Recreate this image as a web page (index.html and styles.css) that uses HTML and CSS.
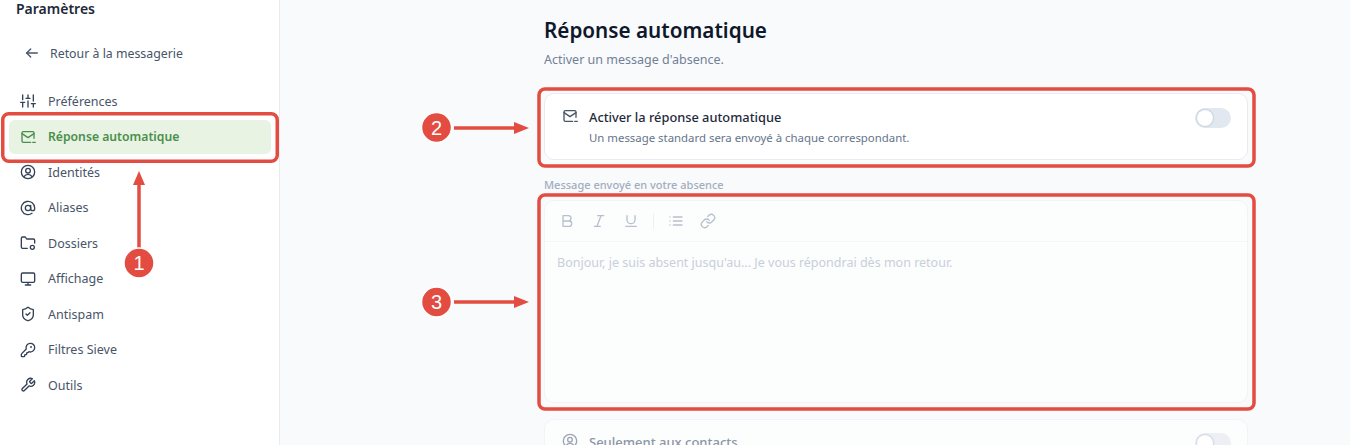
FILE: index.html
```html
<!doctype html>
<html lang="fr">
<head>
    <meta charset="UTF-8">
    <title>Réponse automatique</title>
    <link rel="stylesheet" href="styles.css">
</head>
<body>
<div class="page">
    <aside class="sidebar">
        <div class="sidebar-title">Paramètres</div>
        <a class="back-link">
            <svg class="icon back-icon" viewBox="0 0 24 24"><path d="M20 12H4"/><path d="m10 6-6 6 6 6"/></svg>
            <span>Retour à la messagerie</span>
        </a>
        <nav class="nav">
            <a class="nav-item">
                <svg class="icon" viewBox="0 0 24 24"><path d="M4 21v-7M4 10V3M12 21v-9M12 8V3M20 21v-5M20 12V3M1 14h6M9 8h6M17 16h6"/></svg>
                <span>Préférences</span>
            </a>
            <a class="nav-item active">
                <svg class="icon" viewBox="0 0 24 24"><path d="M21 14V6a2 2 0 0 0-2-2H5a2 2 0 0 0-2 2v12a2 2 0 0 0 2 2h11"/><path d="m3 7 9 6 9-6"/><path d="M19 20h4"/></svg>
                <span>Réponse automatique</span>
            </a>
            <a class="nav-item">
                <svg class="icon" viewBox="0 0 24 24"><circle cx="12" cy="12" r="10"/><circle cx="12" cy="10" r="3.5"/><path d="M6 19a7 7 0 0 1 12 0"/></svg>
                <span>Identités</span>
            </a>
            <a class="nav-item">
                <svg class="icon" viewBox="0 0 24 24"><circle cx="12" cy="12" r="4"/><path d="M16 8v5a3 3 0 0 0 6 0v-1a10 10 0 1 0-4 8"/></svg>
                <span>Aliases</span>
            </a>
            <a class="nav-item">
                <svg class="icon" viewBox="0 0 24 24"><path d="M11 20H4a2 2 0 0 1-2-2V5a2 2 0 0 1 2-2h4l2 3h10a2 2 0 0 1 2 2v4"/><circle cx="18.500" cy="18.500" r="3"/></svg>
                <span>Dossiers</span>
            </a>
            <a class="nav-item">
                <svg class="icon" viewBox="0 0 24 24"><rect x="2" y="3" width="20" height="14" rx="2"/><path d="M8 21h8M12 17v4"/></svg>
                <span>Affichage</span>
            </a>
            <a class="nav-item">
                <svg class="icon" viewBox="0 0 24 24"><path d="M20 13c0 5-3.500 7.500-7.660 8.950a1 1 0 0 1-.67-.01C7.500 20.500 4 18 4 13V6a1 1 0 0 1 1-1c2 0 4.500-1.200 6.240-2.720a1.170 1.170 0 0 1 1.520 0C14.510 3.810 17 5 19 5a1 1 0 0 1 1 1z"/><path d="m9 12 2 2 4-4"/></svg>
                <span>Antispam</span>
            </a>
            <a class="nav-item">
                <svg class="icon" viewBox="0 0 24 24"><path d="M2.586 17.414A2 2 0 0 0 2 18.828V21a1 1 0 0 0 1 1h3a1 1 0 0 0 1-1v-1a1 1 0 0 1 1-1h1a1 1 0 0 0 1-1v-1a1 1 0 0 1 1-1h.172a2 2 0 0 0 1.414-.586l.814-.814a6.500 6.500 0 1 0-4-4z"/><circle cx="16.500" cy="7.500" r=".5"/></svg>
                <span>Filtres Sieve</span>
            </a>
            <a class="nav-item">
                <svg class="icon" viewBox="0 0 24 24"><path d="M14.700 6.300a1 1 0 0 0 0 1.400l1.600 1.600a1 1 0 0 0 1.400 0l3.770-3.770a6 6 0 0 1-7.940 7.940l-6.910 6.910a2.120 2.120 0 0 1-3-3l6.910-6.910a6 6 0 0 1 7.940-7.940l-3.760 3.760z"/></svg>
                <span>Outils</span>
            </a>
        </nav>
    </aside>

    <main class="main">
        <div class="content">
            <h1 class="page-title">Réponse automatique</h1>
            <p class="page-sub">Activer un message d'absence.</p>

            <section class="card toggle-card">
                <svg class="icon" viewBox="0 0 24 24"><path d="M21 14V6a2 2 0 0 0-2-2H5a2 2 0 0 0-2 2v12a2 2 0 0 0 2 2h11"/><path d="m3 7 9 6 9-6"/><path d="M19 20h4"/></svg>
                <div class="toggle-text">
                    <div class="toggle-title">Activer la réponse automatique</div>
                    <div class="toggle-desc">Un message standard sera envoyé à chaque correspondant.</div>
                </div>
                <span class="switch"></span>
            </section>

            <div class="field-label">Message envoyé en votre absence</div>

            <section class="card editor">
                <div class="toolbar">
                    <svg class="icon tool" viewBox="0 0 24 24"><path d="M6 4h8a4 4 0 0 1 0 8H6zM6 12h9a4 4 0 0 1 0 8H6z"/></svg>
                    <svg class="icon tool" viewBox="0 0 24 24"><path d="M19 4h-9M14 20H5M15 4 9 20"/></svg>
                    <svg class="icon tool" viewBox="0 0 24 24"><path d="M6 4v6a6 6 0 0 0 12 0V4M4 20h16"/></svg>
                    <span class="tool-sep"></span>
                    <svg class="icon tool" viewBox="0 0 24 24"><path d="M8 6h13M8 12h13M8 18h13M3 6h.01M3 12h.01M3 18h.01"/></svg>
                    <svg class="icon tool" viewBox="0 0 24 24"><path d="M10 13a5 5 0 0 0 7.540.54l3-3a5 5 0 0 0-7.070-7.070l-1.720 1.710"/><path d="M14 11a5 5 0 0 0-7.540-.54l-3 3a5 5 0 0 0 7.070 7.070l1.710-1.710"/></svg>
                </div>
                <div class="editor-body">Bonjour, je suis absent jusqu'au... Je vous répondrai dès mon retour.</div>
            </section>

            <section class="card toggle-card faded">
                <svg class="icon" viewBox="0 0 24 24"><circle cx="12" cy="12" r="10"/><circle cx="12" cy="10" r="3.5"/><path d="M6 19a7 7 0 0 1 12 0"/></svg>
                <div class="toggle-text">
                    <div class="toggle-title">Seulement aux contacts</div>
                </div>
                <span class="switch"></span>
            </section>
        </div>
    </main>

    <!-- annotations drawn over the screenshot -->
    <svg class="marks" viewBox="0 0 1350 445">
        <rect class="mark-box" x="2.750" y="113.750" width="274.500" height="47.500" rx="6"/>
        <rect class="mark-box" x="539" y="89" width="715" height="77" rx="6"/>
        <rect class="mark-box" x="539" y="195" width="715" height="214" rx="6"/>

        <path class="mark-line" d="M139 248V184"/>
        <path class="mark-head" d="M139 171 145 185H133z"/>
        <circle class="mark-dot" cx="139" cy="263" r="15"/>
        <text class="mark-num" x="139" y="270">1</text>

        <path class="mark-line" d="M454 128H516"/>
        <path class="mark-head" d="M529 128 514 122V134z"/>
        <circle class="mark-dot" cx="436.500" cy="127.500" r="15"/>
        <text class="mark-num" x="436.500" y="134.500">2</text>

        <path class="mark-line" d="M454 302H516"/>
        <path class="mark-head" d="M529 302 514 296V308z"/>
        <circle class="mark-dot" cx="436.500" cy="302" r="15"/>
        <text class="mark-num" x="436.500" y="309">3</text>
    </svg>
</div>
</body>
</html>
```

FILE: styles.css
```css
*, *::after, *::before {
    box-sizing: border-box;
    margin: 0;
    padding: 0;
}

html, body {
    height: 100%;
    overflow: hidden;
}

body {
    font-family: "Noto Sans", "Liberation Sans", sans-serif;
    color: #1e293b;
    background-color: #f9fafc;
}

.page {
    position: relative;
    display: flex;
    width: 1350px;
    height: 445px;
    overflow: hidden;
}

.icon {
    width: 16px;
    height: 16px;
    flex-shrink: 0;
    fill: none;
    stroke: currentColor;
    stroke-width: 2;
    stroke-linecap: round;
    stroke-linejoin: round;
}

/* sidebar */
.sidebar {
    width: 280px;
    flex-shrink: 0;
    background-color: white;
    border-right: 1px solid #e8ebf0;
}

.sidebar-title {
    height: 17px;
    padding-left: 16px;
    font-size: 14px;
    line-height: 17px;
    font-weight: 600;
    color: #1e293b;
}

.back-link {
    display: flex;
    align-items: center;
    gap: 10px;
    margin: 27px 0 0 24px;
    height: 18px;
    font-size: 12.350px;
    color: #475569;
}

.nav {
    display: flex;
    flex-direction: column;
    gap: 2px;
    margin: 22.500px 8px 0 9px;
}

.nav-item {
    display: flex;
    align-items: center;
    gap: 12px;
    height: 33.500px;
    padding-left: 11px;
    border-radius: 6px;
    font-size: 12.500px;
    color: #475569;
}

.nav-item .icon {
    color: #334155;
}

.nav-item.active {
    background-color: #e8f3e4;
    color: #4a8f4a;
    font-size: 12.200px;
    font-weight: 600;
}

.nav-item.active .icon {
    color: #4a8f4a;
}

/* main column */
.main {
    flex: 1;
    padding-left: 264px;
}

.content {
    width: 704px;
}

.page-title {
    margin-top: 15.500px;
    font-size: 20.700px;
    line-height: 28px;
    font-weight: 600;
    color: #0f172a;
}

.page-sub {
    margin-top: 7.500px;
    font-size: 12.500px;
    line-height: 18px;
    color: #718096;
}

.card {
    background-color: white;
    border: 1px solid #e8ebf1;
    border-radius: 10px;
}

.toggle-card {
    display: flex;
    align-items: flex-start;
    gap: 11px;
    height: 67px;
    margin-top: 24px;
    padding: 14px 16px 0 17px;
}

.toggle-card .icon {
    color: #475569;
}

.toggle-text {
    flex: 1;
}

.toggle-title {
    font-size: 12.800px;
    line-height: 18px;
    font-weight: 500;
    color: #1e293b;
}

.toggle-desc {
    margin-top: 4px;
    font-size: 11.400px;
    line-height: 16px;
    color: #64748b;
}

.switch {
    position: relative;
    width: 36px;
    height: 20px;
    border-radius: 10px;
    background-color: #e2e8f0;
}

.switch::after {
    content: '';
    position: absolute;
    top: 2px;
    left: 2px;
    width: 16px;
    height: 16px;
    border-radius: 50%;
    background-color: white;
    box-shadow: 0 0 2px #94a3b8;
}

.field-label {
    margin-top: 17px;
    margin-bottom: 8px;
    font-size: 11px;
    line-height: 15px;
    font-weight: 500;
    color: #a2adbd;
}

/* disabled editor */
.editor {
    height: 203px;
    background-color: #fcfdfd;
    border-color: #f1f3f7;
}

.toolbar {
    display: flex;
    align-items: center;
    height: 41px;
    padding-left: 14px;
    gap: 16px;
    color: #b7c0ce;
    border-bottom: 1px solid #f5f6f8;
}

.tool-sep {
    width: 1px;
    height: 16px;
    margin: 0 -2px;
    background-color: #eceff3;
}

.editor-body {
    padding: 12px 12px;
    font-size: 12.500px;
    line-height: 18px;
    color: #c8cfda;
}

.faded {
    margin-top: 16px;
    padding-top: 13px;
    background-color: #fcfdfd;
    border-color: #f1f3f7;
}

.faded .icon {
    color: #9aa5b5;
}

.faded .toggle-title {
    font-size: 13px;
    color: #8b95a5;
}

.faded .switch {
    background-color: #eceff4;
}

/* red annotations */
.marks {
    position: absolute;
    top: 0;
    left: 0;
    width: 1350px;
    height: 445px;
    pointer-events: none;
}

.mark-box {
    fill: none;
    stroke: #e34c40;
    stroke-width: 3.500;
}

.mark-line {
    fill: none;
    stroke: #e34c40;
    stroke-width: 3.500;
}

.mark-head {
    fill: #e34c40;
}

.mark-dot {
    fill: #e34c40;
    stroke: white;
    stroke-width: 1.500;
}

.mark-num {
    font-family: "Liberation Sans", sans-serif;
    font-size: 20px;
    fill: white;
    text-anchor: middle;
}
```
